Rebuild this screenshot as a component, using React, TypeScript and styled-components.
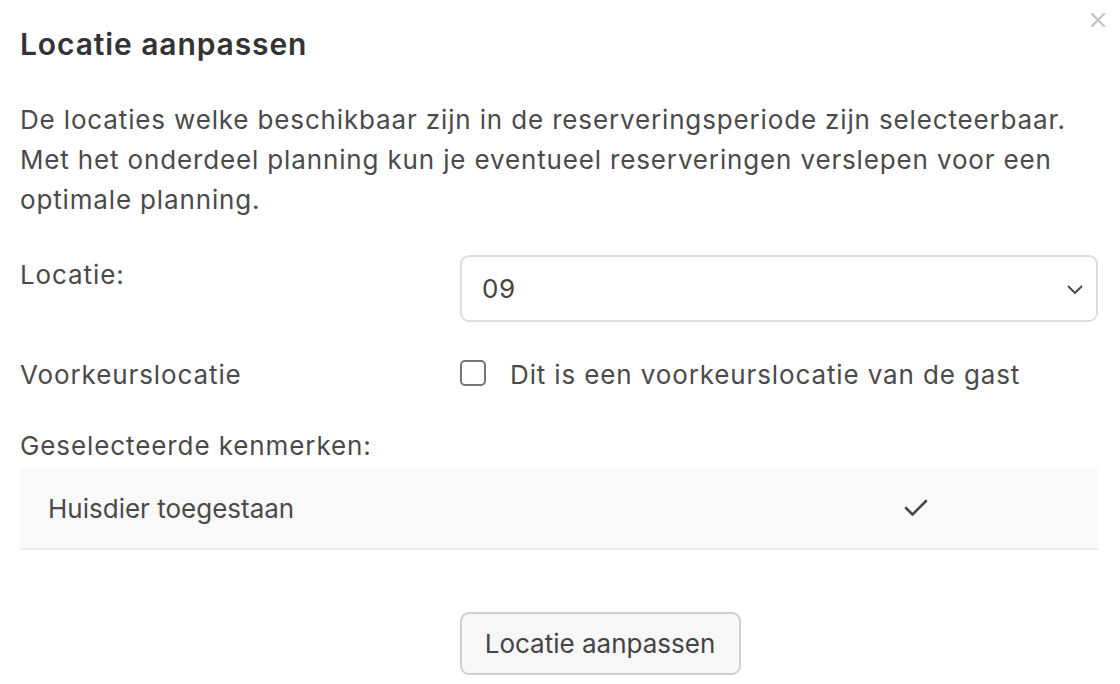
import React from "react";
import styled, { createGlobalStyle } from "styled-components";

const Global = createGlobalStyle`
  html, body { margin: 0; padding: 0; background: #fff; }
  body { font-family: Inter, "Noto Sans", sans-serif; color: #4a4a4a; }
  * { box-sizing: border-box; }
`;

const Dialog = styled.div`
  position: relative;
  width: 1120px;
  height: 684px;
  padding: 24px 22px 0 20px;
  overflow: hidden;
`;

const Close = styled.button`
  position: absolute;
  top: 10px;
  right: 12px;
  width: 20px;
  height: 20px;
  padding: 0;
  border: 0;
  background: none;
  display: flex;
  align-items: center;
  justify-content: center;
`;

const Title = styled.h2`
  margin: 0;
  font-size: 30px;
  font-weight: 600;
  letter-spacing: 0.9px;
  line-height: 40px;
  color: #333;
`;

const Intro = styled.p`
  margin: 36px 0 0;
  font-size: 26px;
  letter-spacing: 0.85px;
  line-height: 40px;
`;

const FormRow = styled.div<{ $mt: number }>`
  display: grid;
  grid-template-columns: 440px 1fr;
  align-items: start;
  margin-top: ${(p) => p.$mt}px;
`;

const Label = styled.div`
  font-size: 26px;
  letter-spacing: 0.9px;
  line-height: 40px;
`;

const SelectBox = styled.div`
  height: 67px;
  border: 2px solid #dedede;
  border-radius: 9px;
  display: flex;
  align-items: center;
  justify-content: space-between;
  padding: 0 12px 0 20px;
  font-size: 26px;
  letter-spacing: 0.5px;
  color: #444;
`;

const CheckLine = styled.label`
  display: flex;
  align-items: center;
  gap: 24px;
  font-size: 26px;
  letter-spacing: 0.87px;
  line-height: 40px;
`;

const Box = styled.span`
  width: 26px;
  height: 26px;
  border: 2px solid #767676;
  border-radius: 5px;
  background: #fff;
  flex: none;
  margin-top: -4px;
`;

const Heading = styled.div`
  margin-top: 31px;
  font-size: 26px;
  letter-spacing: 0.9px;
  line-height: 40px;
`;

const Table = styled.div`
  margin-top: 2px;
  background: #f9f9f9;
  border-bottom: 2px solid #ececec;
`;

const TableRow = styled.div`
  display: grid;
  grid-template-columns: 1fr 120px 122px;
  align-items: center;
  height: 80px;
  padding-left: 28px;
  font-size: 26px;
`;

const CheckCell = styled.div`
  display: flex;
  justify-content: center;
`;

const Footer = styled.div`
  display: flex;
  justify-content: center;
  margin-top: 62px;
  padding-left: 82px;
`;

const Button = styled.button`
  width: 281px;
  height: 63px;
  border: 2px solid #cfcfcf;
  border-radius: 9px;
  background: #f7f7f7;
  font-family: Inter, "Noto Sans", sans-serif;
  font-size: 26px;
  color: #444;
  padding: 0;
`;

export default function App() {
  return (
    <>
      <Global />
      <Dialog>
        <Close aria-label="Sluiten">
          <svg width="16" height="16" viewBox="0 0 16 16">
            <path d="M2 2 L14 14 M14 2 L2 14" stroke="#c4c4c4" strokeWidth="2.4" strokeLinecap="round" />
          </svg>
        </Close>
        <Title>Locatie aanpassen</Title>
        <Intro>
          De locaties welke beschikbaar zijn in de reserveringsperiode zijn selecteerbaar. Met het onderdeel planning kun je eventueel reserveringen verslepen voor een optimale planning.
        </Intro>
        <FormRow $mt={35}>
          <Label>Locatie:</Label>
          <SelectBox>
            <span>09</span>
            <svg width="18" height="12" viewBox="0 0 18 12">
              <path d="M2 3 L9 10 L16 3" fill="none" stroke="#444" strokeWidth="1.8" />
            </svg>
          </SelectBox>
        </FormRow>
        <FormRow $mt={33}>
          <Label>Voorkeurslocatie</Label>
          <CheckLine>
            <Box />
            Dit is een voorkeurslocatie van de gast
          </CheckLine>
        </FormRow>
        <Heading>Geselecteerde kenmerken:</Heading>
        <Table>
          <TableRow>
            <span>Huisdier toegestaan</span>
            <CheckCell>
              <svg width="24" height="18" viewBox="0 0 24 18">
                <path d="M2 9 L8.5 15.5 L22 2" fill="none" stroke="#4a4a4a" strokeWidth="2.6" strokeLinecap="round" strokeLinejoin="round" />
              </svg>
            </CheckCell>
            <span />
          </TableRow>
        </Table>
        <Footer>
          <Button>Locatie aanpassen</Button>
        </Footer>
      </Dialog>
    </>
  );
}
